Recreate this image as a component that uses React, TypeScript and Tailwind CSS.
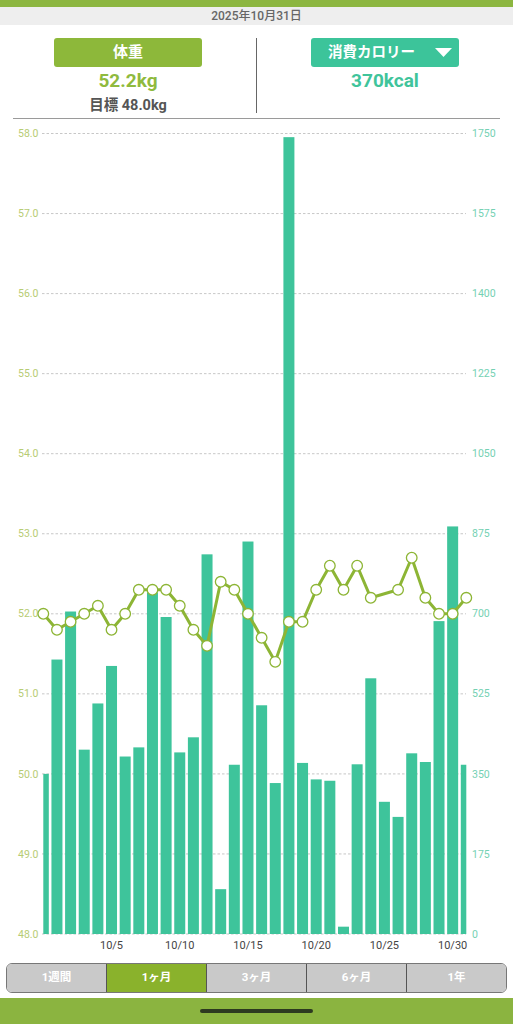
import React from "react";

const KG: (number | null)[] = [52.0, 51.8, 51.9, 52.0, 52.1, 51.8, 52.0, 52.3, 52.3, 52.3, 52.1, 51.8, 51.6, 52.4, 52.3, 52.0, 51.7, 51.4, 51.9, 51.9, 52.3, 52.6, 52.3, 52.6, 52.2, null, 52.3, 52.7, 52.2, 52.0, 52.0, 52.2];
const KCAL = [350, 600, 705, 403, 504, 586, 388, 408, 747, 693, 397, 430, 830, 98, 370, 858, 500, 330, 1742, 374, 338, 335, 16, 371, 559, 289, 256, 395, 376, 684, 891, 370];

const X0 = 43.3;
const STEP = 13.645;
const TOP = 133.5;
const BOT = 934;
const H = BOT - TOP;

const cx = (i: number) => X0 + i * STEP;
const yKg = (v: number) => BOT - ((v - 48) / 10) * H;
const yKcal = (v: number) => BOT - (v / 1750) * H;

const FONT = "Roboto, 'Noto Sans CJK JP', sans-serif";

function Chart() {
  const grid = Array.from({ length: 11 }, (_, k) => k);
  const pts = KG.map((v, i) => (v == null ? null : [cx(i), yKg(v)] as [number, number])).filter(Boolean) as [number, number][];
  const xLabels = [
    { i: 5, t: "10/5" },
    { i: 10, t: "10/10" },
    { i: 15, t: "10/15" },
    { i: 20, t: "10/20" },
    { i: 25, t: "10/25" },
    { i: 30, t: "10/30" },
  ];
  return (
    <svg width={513} height={840} viewBox="0 119 513 840" className="block" style={{ fontFamily: FONT }}>
      <defs>
        <clipPath id="plot">
          <rect x={43.3} y={120} width={423} height={815} />
        </clipPath>
      </defs>
      {grid.map((k) => {
        const y = TOP + (k * H) / 10;
        return (
          <g key={k}>
            <line x1={42} x2={466} y1={y} y2={y} stroke="#b9b9b9" strokeWidth={0.8} strokeDasharray="2.5 2" />
            <text x={38.5} y={y + 3.6} textAnchor="end" fontSize={10.5} fill="#b7cc74">
              {(58 - k).toFixed(1)}
            </text>
            <text x={472} y={y + 3.6} textAnchor="start" fontSize={10.5} fill="#74d1b3">
              {1750 - k * 175}
            </text>
          </g>
        );
      })}
      <g clipPath="url(#plot)">
        {KCAL.map((v, i) => (
          <rect key={i} x={cx(i) - 5.5} y={yKcal(v)} width={11} height={BOT - yKcal(v)} fill="#3ec49b" />
        ))}
      </g>
      <polyline
        points={pts.map((p) => p.join(",")).join(" ")}
        fill="none"
        stroke="#8db535"
        strokeWidth={3}
        strokeLinejoin="round"
      />
      {pts.map((p, i) => (
        <circle key={i} cx={p[0]} cy={p[1]} r={5.3} fill="#ffffff" stroke="#8db535" strokeWidth={1.3} />
      ))}
      {xLabels.map((l) => (
        <text key={l.t} x={cx(l.i)} y={949} textAnchor="middle" fontSize={11} fill="#444444">
          {l.t}
        </text>
      ))}
    </svg>
  );
}

const tabs = ["1週間", "1ヶ月", "3ヶ月", "6ヶ月", "1年"];

export default function App() {
  return (
    <div className="w-[513px] h-[1024px] bg-white flex flex-col overflow-hidden" style={{ fontFamily: FONT }}>
      <div className="h-[7px] bg-[#8cb640]" />
      <div className="h-[18px] bg-[#eeeeee] flex items-center justify-center text-[12px] font-medium text-[#666666] leading-none">
        2025年10月31日
      </div>
      <div className="h-[93px] flex pt-[13px]">
        <div className="flex-1 flex flex-col items-center">
          <div className="w-[148px] h-[29px] rounded-[3px] bg-[#8db83a] flex items-center justify-center text-white text-[15px] font-bold">
            体重
          </div>
          <div className="mt-[3px] text-[19px] leading-[22px] font-bold text-[#8fba3e]">52.2kg</div>
          <div className="mt-[5px] text-[14.5px] leading-[18px] font-bold text-[#555555]">目標 48.0kg</div>
        </div>
        <div className="w-px h-[75px] bg-[#666666]" />
        <div className="flex-1 flex flex-col items-center">
          <div className="w-[148px] h-[29px] rounded-[3px] bg-[#3cc49a] flex items-center justify-between pl-[17px] pr-[7px] text-white text-[14.5px] font-bold">
            <span>消費カロリー</span>
            <svg width="17" height="9" viewBox="0 0 17 9">
              <polygon points="0,0 17,0 8.5,9" fill="#ffffff" />
            </svg>
          </div>
          <div className="mt-[3px] text-[19px] leading-[22px] font-bold text-[#3fc49b]">370kcal</div>
        </div>
      </div>
      <div className="mx-[13px] h-px bg-[#9a9a9a]" />
      <Chart />
      <div className="mt-[4px] mx-[6px] h-[30px] rounded-[6px] border border-[#777777] overflow-hidden flex">
        {tabs.map((t, i) => (
          <div
            key={t}
            className={`flex-1 flex items-center justify-center text-[11.5px] font-bold text-white ${
              i === 1 ? "bg-[#8ab22c]" : "bg-[#c9c9c9]"
            } ${i > 0 ? "border-l border-[#555555]" : ""}`}
          >
            {t}
          </div>
        ))}
      </div>
      <div className="mt-[5px] flex-1 bg-[#8bb440] flex items-center justify-center">
        <div className="w-[113px] h-[4px] rounded-full bg-[#2d3a20]" />
      </div>
    </div>
  );
}
